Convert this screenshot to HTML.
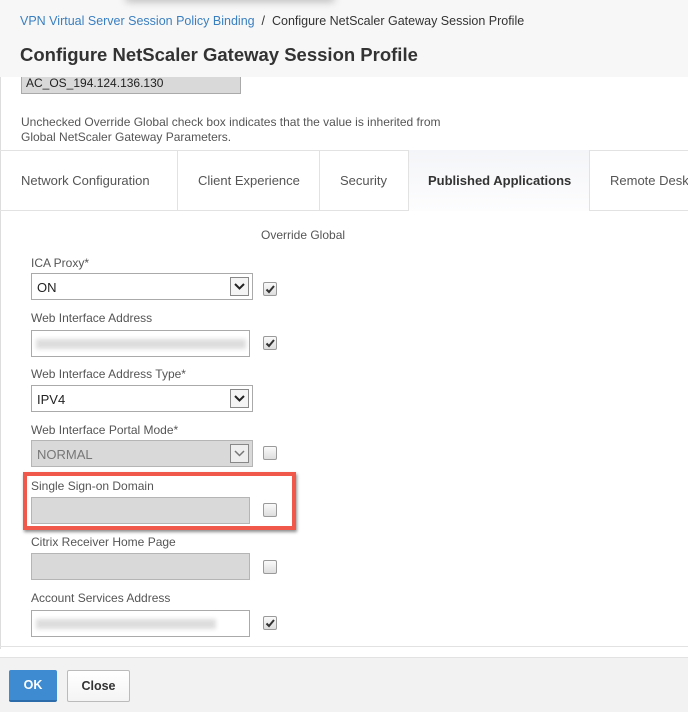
<!DOCTYPE html>
<html><head><meta charset="utf-8"><style>
*{box-sizing:border-box;margin:0;padding:0}
body{width:688px;height:712px;overflow:hidden;background:#fff;font-family:"Liberation Sans",sans-serif;position:relative;color:#333}
.a{position:absolute}
.lbl{position:absolute;left:31px;font-size:12px;color:#555}
.inp{position:absolute;left:31px;width:219px;height:27px;border:1px solid #aaa;background:#fff}
.dis{background:#d9d9d9;border-color:#b5b5b5}
.sel{width:222px;font-size:13px;color:#222;padding:6px 5px}
.arr{position:absolute;right:3px;top:3px;width:19px;height:19px;border:1px solid #888;background:#f4f4f4}
.cb{position:absolute;left:263px;width:14px;height:14px;border:1px solid #9a9a9a;border-radius:2px;background:linear-gradient(#fafafa,#ddd)}
.cb svg{position:absolute;left:0;top:0}
.blur{position:absolute;left:4px;top:8px;height:10px;background:#ddd;filter:blur(2px)}
</style></head><body>
<div class="a" style="left:0;top:0;width:688px;height:77px;background:#f7f7f7"></div>
<div class="a" style="left:125px;top:-6px;width:210px;height:8px;background:#bbb;filter:blur(4px);border-radius:4px"></div>
<div class="a" style="left:20px;top:14px;font-size:12.5px;white-space:nowrap"><span style="color:#3a7fc0">VPN Virtual Server Session Policy Binding</span><span style="color:#333">&nbsp;&nbsp;/&nbsp;&nbsp;Configure NetScaler Gateway Session Profile</span></div>
<div class="a" style="left:20px;top:44px;font-size:18.5px;font-weight:bold;color:#333;white-space:nowrap">Configure NetScaler Gateway Session Profile</div>
<div class="a" style="left:0;top:77px;width:1px;height:572px;background:#ddd"></div>
<div class="a" style="left:21px;top:77px;width:220px;height:17px;background:#d9d9d9;border:1px solid #aaa;border-top:none;font-size:12px;padding-left:4px;line-height:12px;color:#222">AC_OS_194.124.136.130</div>
<div class="a" style="left:21px;top:115px;font-size:12px;color:#555;line-height:15px;white-space:nowrap">Unchecked Override Global check box indicates that the value is inherited from<br>Global NetScaler Gateway Parameters.</div>
<div class="a" style="left:0;top:150px;width:688px;height:1px;background:#e2e2e2"></div>
<div class="a" style="left:0;top:210px;width:688px;height:1px;background:#e2e2e2"></div>
<div class="a" style="left:408px;top:150px;width:182px;height:61px;background:linear-gradient(#f4f5f8,#fdfdfe);border-left:1px solid #e2e2e2;border-right:1px solid #e2e2e2"></div>
<div class="a" style="left:177px;top:150px;width:1px;height:60px;background:#e2e2e2"></div>
<div class="a" style="left:319px;top:150px;width:1px;height:60px;background:#e2e2e2"></div>
<div class="a" style="top:173px;left:21px;font-size:13px;color:#555">Network Configuration</div>
<div class="a" style="top:173px;left:198px;font-size:13px;color:#555">Client Experience</div>
<div class="a" style="top:173px;left:340px;font-size:13px;color:#555">Security</div>
<div class="a" style="top:173px;left:428px;font-size:13px;font-weight:bold;color:#333">Published Applications</div>
<div class="a" style="top:173px;left:610px;font-size:13px;color:#555;white-space:nowrap">Remote Desktop</div>
<div class="a" style="left:261px;top:228px;font-size:12px;color:#555">Override Global</div>

<div class="lbl" style="top:256px">ICA Proxy*</div>
<div class="inp sel" style="top:273px">ON<div class="arr"><svg width="17" height="17"><path d="M4 6l4.5 4.5L13 6" stroke="#222" stroke-width="2" fill="none"/></svg></div></div>
<div class="cb" style="top:282px"><svg width="12" height="12"><path d="M2.5 6.5l2.5 2.5L10 3" stroke="#333" stroke-width="2" fill="none"/></svg></div>

<div class="lbl" style="top:311px">Web Interface Address</div>
<div class="inp" style="top:330px"><div class="blur" style="width:210px"></div></div>
<div class="cb" style="top:336px"><svg width="12" height="12"><path d="M2.5 6.5l2.5 2.5L10 3" stroke="#333" stroke-width="2" fill="none"/></svg></div>

<div class="lbl" style="top:367px">Web Interface Address Type*</div>
<div class="inp sel" style="top:385px">IPV4<div class="arr"><svg width="17" height="17"><path d="M4 6l4.5 4.5L13 6" stroke="#222" stroke-width="2" fill="none"/></svg></div></div>

<div class="lbl" style="top:423px">Web Interface Portal Mode*</div>
<div class="inp sel dis" style="top:440px;color:#777">NORMAL<div class="arr" style="background:#eee"><svg width="17" height="17"><path d="M4 6l4.5 4.5L13 6" stroke="#777" stroke-width="1.5" fill="none"/></svg></div></div>
<div class="cb" style="top:446px"></div>

<div class="a" style="left:23px;top:472px;width:273px;height:58px;border:4px solid #f0584b;box-shadow:1px 2px 3px rgba(0,0,0,.45)"></div>
<div class="lbl" style="top:479px">Single Sign-on Domain</div>
<div class="inp dis" style="top:497px"></div>
<div class="cb" style="top:503px"></div>

<div class="lbl" style="top:535px">Citrix Receiver Home Page</div>
<div class="inp dis" style="top:553px"></div>
<div class="cb" style="top:560px"></div>

<div class="lbl" style="top:591px">Account Services Address</div>
<div class="inp" style="top:610px"><div class="blur" style="width:180px"></div></div>
<div class="cb" style="top:616px"><svg width="12" height="12"><path d="M2.5 6.5l2.5 2.5L10 3" stroke="#333" stroke-width="2" fill="none"/></svg></div>

<div class="a" style="left:0;top:646px;width:688px;height:1px;background:#e2e2e2"></div>
<div class="a" style="left:0;top:657px;width:688px;height:55px;background:#f2f2f2;border-top:1px solid #e2e2e2"></div>
<div class="a" style="left:9px;top:670px;width:48px;height:32px;background:#3f8bd1;border-bottom:2px solid #2d6cab;border-radius:2px;color:#fff;font-weight:bold;font-size:12.5px;text-align:center;line-height:31px">OK</div>
<div class="a" style="left:67px;top:670px;width:63px;height:32px;background:linear-gradient(#fff,#f4f4f4);border:1px solid #bbb;border-radius:2px;color:#333;font-weight:bold;font-size:12.5px;text-align:center;line-height:30px">Close</div>
</body></html>
